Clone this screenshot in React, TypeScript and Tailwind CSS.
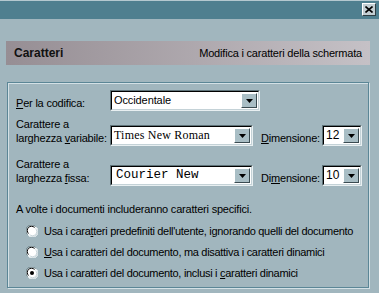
import React from "react";

function Arrow() {
  return (
    <svg width="7" height="4" viewBox="0 0 7 4">
      <path d="M0 0h7L3.5 4z" fill="#000" />
    </svg>
  );
}

function Select({ value, width, font }: { value: string; width: string; font: string }) {
  return (
    <div
      className={`flex h-[21px] ${width} border border-t-[#5f7379] border-l-[#5f7379] border-b-[#e8eff1] border-r-[#e8eff1]`}
    >
      <div className="flex flex-1 bg-white border border-t-black border-l-black border-b-[#c4d2d7] border-r-[#c4d2d7]">
        <span className={`flex-1 pl-[2px] leading-[17px] text-black overflow-hidden whitespace-nowrap ${font}`}>{value}</span>
        <div className="w-[16px] my-px mr-px flex items-center justify-center bg-[#a9bec5] border border-t-white border-l-white border-b-[#3a4b51] border-r-[#3a4b51]">
          <Arrow />
        </div>
      </div>
    </div>
  );
}

function Radio({ checked }: { checked?: boolean }) {
  return (
    <svg width="12" height="12" viewBox="0 0 12 12" className="shrink-0">
      <circle cx="6" cy="6" r="5.5" fill="#fff" />
      <path d="M1.5 9.5A5.5 5.5 0 0 1 9.5 1.5" stroke="#6d7f85" strokeWidth="1" fill="none" />
      <path d="M2.5 8.5A4.2 4.2 0 0 1 8.5 2.5" stroke="#000" strokeWidth="1" fill="none" />
      <path d="M10.5 2.5A5.5 5.5 0 0 1 2.5 10.5" stroke="#f4f8f9" strokeWidth="1" fill="none" />
      <path d="M9.5 3.5A4.2 4.2 0 0 1 3.5 9.5" stroke="#c8d5da" strokeWidth="1" fill="none" />
      {checked && <circle cx="6" cy="6" r="2" fill="#000" />}
    </svg>
  );
}

const label = "text-[11px] leading-[14px] tracking-[-0.2px] text-black whitespace-nowrap";
const radioText = "text-[11px] leading-[14px] tracking-[-0.3px] text-black whitespace-nowrap";

export default function App() {
  return (
    <div
      className="w-[379px] h-[293px] bg-[#a1b6be] flex flex-col overflow-hidden"
      style={{ fontFamily: '"Liberation Sans", Arial, sans-serif' }}
    >
      <div className="h-px bg-[#b4c8cf]" />
      <div className="h-[18px] bg-[#4f7f8f] flex items-start justify-end pr-[3px] pt-[2px]">
        <div className="w-[14px] h-[13px] bg-[#c3ced3] border border-t-white border-l-white border-b-[#2f3e43] border-r-[#2f3e43] flex items-center justify-center">
          <svg width="8" height="7" viewBox="0 0 8 7">
            <path d="M0.5 0.5L7.5 6.5M7.5 0.5L0.5 6.5" stroke="#000" strokeWidth="1.6" />
          </svg>
        </div>
      </div>

      <div className="mt-[22px] ml-[6px] w-[364px] h-[24px] flex items-center justify-between pl-[8px] pr-[8px] bg-gradient-to-r from-[#968e94] to-[#c5c1c6]">
        <span className="text-[12px] font-bold text-[#111]">Caratteri</span>
        <span className={label}>Modifica i caratteri della schermata</span>
      </div>

      <div className="mt-[17px] ml-[7px] w-[362px] h-[206px] border border-[#5b8696] shadow-[inset_1px_1px_0_#d3e0e5,1px_1px_0_#d3e0e5] pl-[8px] pt-[7px]">
        <div className="flex items-end">
          <div className={`w-[94px] pb-px ${label}`}>
            <u>P</u>er la codifica:
          </div>
          <Select value="Occidentale" width="w-[150px]" font="text-[11px] tracking-[-0.1px]" />
        </div>

        <div className="flex items-end mt-[6px]">
          <div className={`w-[94px] pb-px ${label}`}>
            Carattere a<br />larghezza <u>v</u>ariabile:
          </div>
          <Select
            value="Times New Roman"
            width="w-[143px]"
            font="text-[12px] tracking-[0.2px] [font-family:'Liberation_Serif',serif]"
          />
          <div className={`ml-[8px] w-[61px] pb-px ${label}`}>
            <u>D</u>imensione:
          </div>
          <Select value="12" width="w-[40px]" font="text-[12px]" />
        </div>

        <div className="flex items-end mt-[11px]">
          <div className={`w-[94px] pb-px ${label}`}>
            Carattere a<br />larghezza <u>f</u>issa:
          </div>
          <Select
            value="Courier New"
            width="w-[143px]"
            font="text-[12.5px] pl-[4px] [font-family:'Liberation_Mono',monospace]"
          />
          <div className={`ml-[8px] w-[61px] pb-px ${label}`}>
            Di<u>m</u>ensione:
          </div>
          <Select value="10" width="w-[40px]" font="text-[12px]" />
        </div>

        <div className={`mt-[16px] ${label}`}>A volte i documenti includeranno caratteri specifici.</div>

        <div className="mt-[4px] flex flex-col pl-[10px]">
          <div className="h-[21px] flex items-center gap-[6px]">
            <Radio />
            <span className={radioText}>
              Usa i cara<u>t</u>teri predefiniti dell'utente, ignorando quelli del documento
            </span>
          </div>
          <div className="h-[21px] flex items-center gap-[6px]">
            <Radio />
            <span className={radioText}>
              <u>U</u>sa i caratteri del documento, ma disattiva i caratteri dinamici
            </span>
          </div>
          <div className="h-[21px] flex items-center gap-[6px]">
            <Radio checked />
            <span className={radioText}>
              Usa i caratteri del documento, inclusi i <u>c</u>aratteri dinamici
            </span>
          </div>
        </div>
      </div>
    </div>
  );
}
